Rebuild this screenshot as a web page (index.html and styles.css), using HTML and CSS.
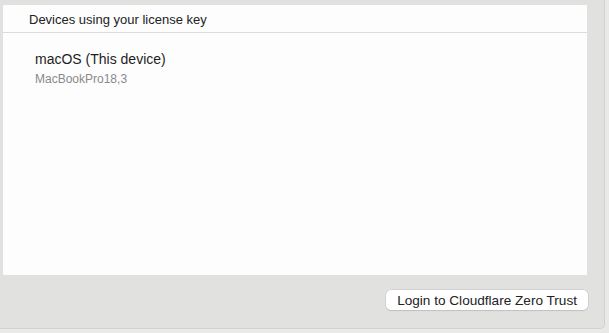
FILE: index.html
```html
<!DOCTYPE html>
<html lang="en">
<head>
  <meta charset="UTF-8">
  <title>Devices</title>
  <link rel="stylesheet" href="styles.css">
</head>
<body>
  <div class="window">
    <div class="panel">
      <div class="panel-head">Devices using your license key</div>
      <div class="device">
        <div class="device-name">macOS (This device)</div>
        <div class="device-model">MacBookPro18,3</div>
      </div>
    </div>
    <div class="footer">
      <button class="login">Login to Cloudflare Zero Trust</button>
    </div>
  </div>
</body>
</html>
```

FILE: styles.css
```css
body { margin: 0; background: #e9e9e8; font-family: "Liberation Sans", Arial, sans-serif; color: #222; }
.window { width: 605px; height: 329px; box-sizing: border-box; padding: 5px 0 0 3px; background: #e1e1e0; border-right: 1px solid #d2d2d1; border-bottom: 1px solid #d2d2d1; border-bottom-right-radius: 5px; }
.panel { width: 584px; height: 270px; background: #fdfdfd; }
.panel-head { height: 28px; box-sizing: border-box; padding: 7px 0 0 26px; font-size: 13px; border-bottom: 1px solid #dcdcdc; }
.device { padding: 18px 0 0 32px; }
.device-name { font-size: 14px; color: #1e1e1e; }
.device-model { font-size: 12px; color: #8a8a8a; margin-top: 5px; }
.footer { display: flex; justify-content: flex-end; padding: 15px 16px 0 0; }
.login { font-family: inherit; font-size: 13.6px; color: #222; background: #fff; border: none; border-radius: 5px; height: 20px; padding: 0 11px; box-shadow: 0 0 0 0.5px #c4c4c4, 0 1px 1px rgba(0,0,0,0.15); }
```
